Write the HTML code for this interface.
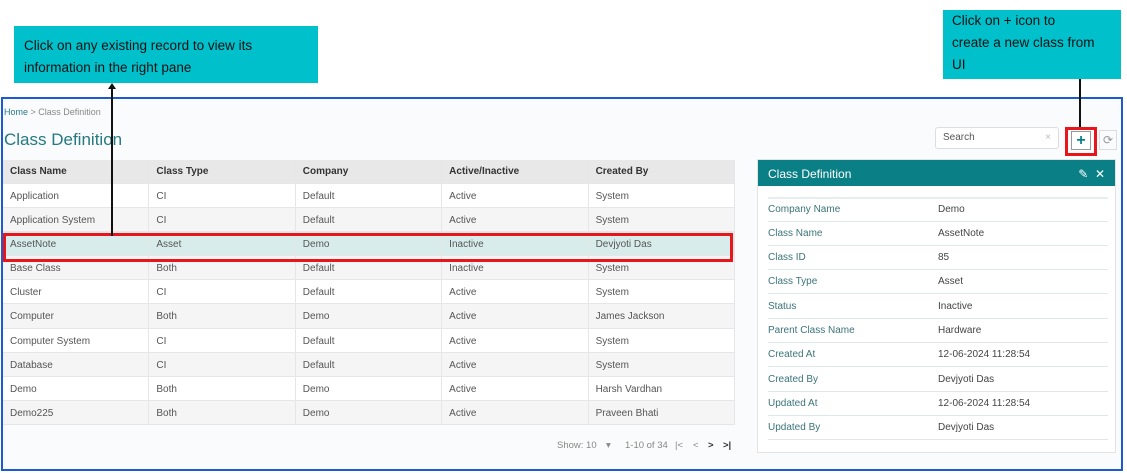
<!DOCTYPE html>
<html><head><style>
*{margin:0;padding:0;box-sizing:border-box}
body{width:1127px;height:473px;background:#fff;position:relative;font-family:"Liberation Sans",sans-serif;overflow:hidden}
.abs{position:absolute}
.call{background:#00c0cc;color:#111;font-size:13.5px;line-height:22px;padding:9px 10px 0 10px}
.frame{left:1px;top:97px;width:1122px;height:374px;border:2px solid #1b59d6;background:#fafbfc}
.tb{left:3px;top:160px;width:732px;font-size:10px;color:#555}
.r{display:flex;height:24.2px;line-height:25px;border-bottom:1px solid #e6e6e6;background:#fff}
.r:nth-child(odd){background:#f5f5f5}
.r div{width:146.4px;padding-left:7px;border-right:1px solid #e6e6e6;white-space:nowrap}
.r.h{background:#e8e8e8;font-weight:bold;color:#333;height:23.5px;line-height:23px}
.r.sel{background:#d9ecec}
.rp{left:757px;top:159px;width:359px;height:294px;background:#fff;border:1px solid #e3e3e3}
.rh{height:26px;background:#0b7f86;color:#fff;font-size:12px;padding:7px 10px}
.rr{position:absolute;left:10px;width:340px;height:24.3px;border-bottom:1px solid #dfe8e8;font-size:10px;line-height:24px}
.rr span{position:absolute;left:0;color:#3b7479}
.rr b{position:absolute;left:170px;font-weight:normal;color:#444}
.pg{position:absolute;top:440px;font-size:9.5px;color:#888}
</style></head><body>
<div class="abs call" style="left:14px;top:26px;width:304px;height:57px">Click on any existing record to view its information in the right pane</div>
<div class="abs call" style="left:943px;top:10px;width:178px;height:69px;padding:0 0 0 9px;white-space:nowrap">Click on + icon to<br>create a new class from<br>UI</div>
<div class="frame abs"></div>
<div class="abs" style="left:4px;top:107px;font-size:9px;color:#888"><span style="color:#2a7a8a">Home</span> &gt; Class Definition</div>
<div class="abs" style="left:4px;top:130px;font-size:17px;color:#247a80">Class Definition</div>
<div class="abs tb">
<div class="r h"><div>Class Name</div><div>Class Type</div><div>Company</div><div>Active/Inactive</div><div>Created By</div></div>
<div class="r"><div>Application</div><div>CI</div><div>Default</div><div>Active</div><div>System</div></div>
<div class="r"><div>Application System</div><div>CI</div><div>Default</div><div>Active</div><div>System</div></div>
<div class="r sel"><div>AssetNote</div><div>Asset</div><div>Demo</div><div>Inactive</div><div>Devjyoti Das</div></div>
<div class="r"><div>Base Class</div><div>Both</div><div>Default</div><div>Inactive</div><div>System</div></div>
<div class="r"><div>Cluster</div><div>CI</div><div>Default</div><div>Active</div><div>System</div></div>
<div class="r"><div>Computer</div><div>Both</div><div>Demo</div><div>Active</div><div>James Jackson</div></div>
<div class="r"><div>Computer System</div><div>CI</div><div>Default</div><div>Active</div><div>System</div></div>
<div class="r"><div>Database</div><div>CI</div><div>Default</div><div>Active</div><div>System</div></div>
<div class="r"><div>Demo</div><div>Both</div><div>Demo</div><div>Active</div><div>Harsh Vardhan</div></div>
<div class="r"><div>Demo225</div><div>Both</div><div>Demo</div><div>Active</div><div>Praveen Bhati</div></div>
</div>
<div class="abs" style="left:3px;top:233px;width:730px;height:29px;border:3px solid #e8151b"></div>
<div class="abs" style="left:111px;top:86px;width:2px;height:150px;background:#111"></div>
<div class="abs" style="left:108px;top:83px;width:0;height:0;border-left:4px solid transparent;border-right:4px solid transparent;border-bottom:6px solid #111"></div>
<div class="pg" style="left:557px">Show: 10</div>
<div class="pg" style="left:606px">▾</div>
<div class="pg" style="left:625px">1-10 of 34</div>
<div class="pg" style="left:675px">|&lt;</div>
<div class="pg" style="left:693px">&lt;</div>
<div class="pg" style="left:708px;color:#333;font-weight:bold">&gt;</div>
<div class="pg" style="left:723px;color:#333;font-weight:bold">&gt;|</div>
<div class="abs" style="left:935px;top:127px;width:124px;height:22px;border:1px solid #ddd;border-radius:3px;background:#fff;font-size:10px;color:#555;padding:4px 7px">Search<span style="float:right;color:#bbb">×</span></div>
<div class="abs" style="left:1079px;top:79px;width:2px;height:48px;background:#111"></div>
<div class="abs" style="left:1065px;top:127px;width:32px;height:29px;border:3px solid #e8151b"></div>
<div class="abs" style="left:1071px;top:131px;width:20px;height:19px;border:1px solid #999;background:#fff;color:#0b7f86;font-size:16px;font-weight:bold;text-align:center;line-height:17px">+</div>
<div class="abs" style="left:1099px;top:130px;width:18px;height:20px;border:1px solid #ddd;color:#999;font-size:12px;text-align:center;line-height:18px">⟳</div>
<div class="abs rp">
<div class="rh">Class Definition<span style="float:right;font-size:12px">✎ &nbsp;✕</span></div>
<div class="rr" style="top:37px;height:1px;border-bottom:2px solid #e6eeee"></div>
<div class="rr" style="top:38px"><span>Company Name</span><b>Demo</b></div>
<div class="rr" style="top:62px"><span>Class Name</span><b>AssetNote</b></div>
<div class="rr" style="top:86px"><span>Class ID</span><b>85</b></div>
<div class="rr" style="top:110px"><span>Class Type</span><b>Asset</b></div>
<div class="rr" style="top:135px"><span>Status</span><b>Inactive</b></div>
<div class="rr" style="top:159px"><span>Parent Class Name</span><b>Hardware</b></div>
<div class="rr" style="top:183px"><span>Created At</span><b>12-06-2024 11:28:54</b></div>
<div class="rr" style="top:208px"><span>Created By</span><b>Devjyoti Das</b></div>
<div class="rr" style="top:232px"><span>Updated At</span><b>12-06-2024 11:28:54</b></div>
<div class="rr" style="top:256px"><span>Updated By</span><b>Devjyoti Das</b></div>
</div>
</body></html>
